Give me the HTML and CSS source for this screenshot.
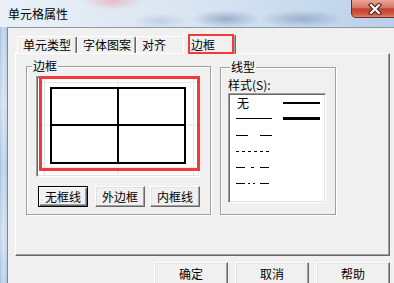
FILE: index.html
```html
<!DOCTYPE html>
<html lang="zh-CN">
<head>
<meta charset="utf-8">
<title>单元格属性</title>
<link rel="stylesheet" href="styles.css">
</head>
<body>
<div class="window">
  <div class="titlebar">
    <span class="title">单元格属性</span>
    <div class="close">
      <svg width="16" height="12" viewBox="0 0 16 12">
        <path d="M4 2 L12 10 M12 2 L4 10" stroke="#3a1d18" stroke-width="4.2" stroke-linecap="square" fill="none"/>
        <path d="M4 2 L12 10 M12 2 L4 10" stroke="#ffffff" stroke-width="2.2" stroke-linecap="square" fill="none"/>
      </svg>
    </div>
  </div>
  <div class="main">
    <div class="frame"></div>
    <div class="client">
      <div class="tabs">
        <div class="tab t1">单元类型</div>
        <div class="tab t2">字体图案</div>
        <div class="tab t3">对齐</div>
        <div class="tab sel">边框<span class="mark mark-tab"></span></div>
      </div>
      <div class="panel">
        <fieldset class="group g1">
          <legend>边框</legend>
          <div class="gbody g1-body">
            <div class="preview">
              <svg class="grid" width="162" height="99" viewBox="0 0 162 99">
                <g stroke="#e6e6e6" stroke-width="1">
                  <line x1="7.5" y1="1" x2="7.5" y2="98"/>
                  <line x1="81" y1="1" x2="81" y2="98"/>
                  <line x1="156.5" y1="1" x2="156.5" y2="98"/>
                  <line x1="1" y1="5.5" x2="161" y2="5.5"/>
                  <line x1="1" y1="48" x2="161" y2="48"/>
                  <line x1="1" y1="90.5" x2="161" y2="90.5"/>
                </g>
                <g stroke="#000" stroke-width="2" fill="none">
                  <rect x="14" y="11" width="134" height="75"/>
                  <line x1="81" y1="11" x2="81" y2="86"/>
                  <line x1="14" y1="48" x2="148" y2="48"/>
                </g>
              </svg>
              <span class="mark mark-preview"></span>
            </div>
            <div class="btnrow">
              <button class="btn small default b1">无框线</button>
              <button class="btn small b2">外边框</button>
              <button class="btn small b3">内框线</button>
            </div>
          </div>
        </fieldset>
        <fieldset class="group g2">
          <legend>线型</legend>
          <div class="gbody g2-body">
            <div class="label">样式(S):</div>
            <div class="listbox">
              <div class="row">
                <div class="cl text">无</div>
                <div class="cr"><svg width="37" height="16"><line x1="0" y1="8" x2="37" y2="8" stroke="#000" stroke-width="2"/></svg></div>
              </div>
              <div class="row">
                <div class="cl"><svg width="36" height="16"><line x1="0" y1="7.5" x2="36" y2="7.5" stroke="#000" stroke-width="1"/></svg></div>
                <div class="cr"><svg width="37" height="16"><line x1="0" y1="7.5" x2="37" y2="7.5" stroke="#000" stroke-width="3"/></svg></div>
              </div>
              <div class="row">
                <div class="cl"><svg width="36" height="16"><line x1="0" y1="8.5" x2="36" y2="8.5" stroke="#000" stroke-width="1" stroke-dasharray="12 12"/></svg></div>
              </div>
              <div class="row">
                <div class="cl"><svg width="36" height="16"><line x1="0" y1="8.5" x2="34" y2="8.5" stroke="#000" stroke-width="1" stroke-dasharray="3 3"/></svg></div>
              </div>
              <div class="row">
                <div class="cl"><svg width="36" height="16"><line x1="0" y1="8.5" x2="34" y2="8.5" stroke="#000" stroke-width="1" stroke-dasharray="9 6 3 6"/></svg></div>
              </div>
              <div class="row">
                <div class="cl"><svg width="36" height="16"><line x1="0" y1="8.5" x2="34" y2="8.5" stroke="#000" stroke-width="1" stroke-dasharray="9 3 2 3 2 5"/></svg></div>
              </div>
            </div>
          </div>
        </fieldset>
      </div>
      <div class="footer">
        <button class="btn big">确定</button>
        <button class="btn big">取消</button>
        <button class="btn big">帮助</button>
      </div>
    </div>
  </div>
</div>
</body>
</html>
```

FILE: styles.css
```css
* { box-sizing: border-box; }
html, body { margin: 0; padding: 0; }
body {
  width: 394px;
  height: 283px;
  overflow: hidden;
  font-family: "Noto Sans CJK SC", "Noto Sans", sans-serif;
  font-size: 12px;
  color: #000;
  background: #f0f0f0;
}
.window {
  display: flex;
  flex-direction: column;
  height: 283px;
}
.titlebar {
  height: 27px;
  flex-shrink: 0;
  display: flex;
  align-items: flex-start;
  background:
    radial-gradient(30px 9px at 112px 1px, rgba(232, 150, 160, 0.55), rgba(232, 150, 160, 0)),
    radial-gradient(34px 9px at 226px 19px, rgba(105, 135, 172, 0.55), rgba(105, 135, 172, 0)),
    radial-gradient(42px 9px at 302px 19px, rgba(105, 135, 172, 0.5), rgba(105, 135, 172, 0)),
    radial-gradient(28px 8px at 160px 21px, rgba(150, 175, 205, 0.4), rgba(150, 175, 205, 0)),
    linear-gradient(to right, #e9f0f7 0%, #dde7f2 40%, #cadbee 75%, #b9cfe9 100%);
}
.title {
  margin: 8px 0 0 8px;
  line-height: 12px;
  white-space: nowrap;
}
.close {
  margin-left: auto;
  margin-right: -4px;
  width: 47px;
  height: 18px;
  display: flex;
  align-items: center;
  justify-content: center;
  border: 1px solid #6d2a22;
  border-top: none;
  border-radius: 0 0 5px 5px;
  background: linear-gradient(#eaa596 0%, #d77462 45%, #c43f2c 52%, #cf5d45 85%, #e08a70 100%);
}
.close svg { display: block; }
.main {
  display: flex;
  flex: 1;
  min-height: 0;
}
.frame {
  width: 7px;
  flex-shrink: 0;
  background:
    linear-gradient(rgba(255,255,255,0) 0%, rgba(255,255,255,0.35) 30%, rgba(255,255,255,0) 55%, rgba(255,255,255,0.3) 80%, rgba(255,255,255,0) 100%),
    linear-gradient(to right, #a7c1de 0, #cadcef 3px, #b1c9e4 7px);
}
.client {
  flex: 1;
  min-width: 0;
  background: #f0f0f0;
  border-top: 1px solid #8d99a7;
  border-left: 1px solid #7b8796;
  padding: 6px 0 0 7px;
}
.tabs {
  display: flex;
  align-items: flex-end;
  height: 19px;
  margin-left: 2px;
}
.tab {
  height: 17px;
  border-top: 1px solid #fff;
  border-left: 1px solid #fff;
  border-right: 1px solid #696969;
  box-shadow: inset -1px 0 0 #a0a0a0;
  border-radius: 2px 2px 0 0;
  padding: 1px 0 0 5px;
  line-height: 14px;
  white-space: nowrap;
}
.t1 { width: 60px; }
.t2 { width: 59px; }
.t3 { width: 49px; }
.tab.sel {
  width: 53px;
  height: 20px;
  margin-left: -2px;
  margin-bottom: -1px;
  padding: 3px 0 0 7px;
  position: relative;
  z-index: 1;
  background: #f0f0f0;
}
.mark {
  position: absolute;
  border-style: solid;
  border-color: #f4393b;
}
.mark-tab {
  left: 4px;
  top: -1px;
  width: 46px;
  height: 20px;
  border-width: 2px;
}
.panel {
  width: 375px;
  height: 203px;
  border: 1px solid;
  border-color: #fff #696969 #696969 #fff;
  box-shadow: inset -1px -1px 0 #a0a0a0;
  display: flex;
  align-items: flex-start;
  gap: 9px;
  padding: 6px 0 0 10px;
}
.group {
  margin: 0;
  padding: 0;
  min-width: 0;
  border: 1px solid #a0a0a0;
  box-shadow: 1px 1px 0 #fff, inset 1px 1px 0 #fff;
}
.group legend {
  padding: 0 1px;
  line-height: 12px;
  background: #f0f0f0;
}
.g1 { width: 185px; height: 155px; }
.g1 legend { margin-left: 5px; }
.g2 { width: 116px; height: 154px; margin-top: 1px; }
.g2 legend { margin-left: 9px; }
.g1-body { padding: 4px 0 0 9px; }
.g2-body { padding: 0 0 0 7px; }
.preview {
  position: relative;
  width: 164px;
  height: 101px;
  background: #fff;
  border: 1px solid;
  border-color: #a0a0a0 #fff #fff #a0a0a0;
  box-shadow: inset 1px 1px 0 #696969, inset -1px -1px 0 #e3e3e3;
}
.grid { display: block; }
.mark-preview {
  left: 2px;
  top: -1px;
  width: 161px;
  height: 95px;
  border-width: 3px;
}
.btnrow {
  display: flex;
  margin-top: 9px;
}
.btn {
  font-family: inherit;
  font-size: 12px;
  line-height: 12px;
  color: #000;
  padding: 0;
  margin: 0;
  background: #f0f0f0;
  border: 1px solid;
  border-color: #fff #696969 #696969 #fff;
  box-shadow: inset -1px -1px 0 #a0a0a0, inset 1px 1px 0 #e3e3e3;
  display: flex;
  align-items: center;
  justify-content: center;
  white-space: nowrap;
}
.btn.default {
  border-color: #000;
  box-shadow: inset 1px 1px 0 #fff, inset -1px -1px 0 #696969, inset -2px -2px 0 #a0a0a0;
}
.small { width: 50px; height: 21px; }
.b1 { margin-left: 2px; }
.b2 { margin-left: 7px; }
.b3 { margin-left: 5px; }
.label {
  margin-top: 6px;
  line-height: 12px;
  white-space: nowrap;
}
.listbox {
  margin-top: 2px;
  width: 98px;
  height: 110px;
  background: #fff;
  border: 1px solid;
  border-color: #a0a0a0 #fff #fff #a0a0a0;
  box-shadow: inset 1px 1px 0 #696969, inset -1px -1px 0 #e3e3e3;
  padding: 1px 0 0 7px;
}
.row {
  display: flex;
  align-items: center;
  height: 16px;
}
.cl { width: 36px; height: 16px; }
.cl.text { line-height: 16px; padding-left: 1px; }
.cr { width: 37px; height: 16px; margin-left: 11px; }
.row svg { display: block; }
.footer {
  width: 375px;
  margin-top: 6px;
  display: flex;
  justify-content: flex-end;
  gap: 7px;
}
.big { width: 74px; height: 23px; }
```
